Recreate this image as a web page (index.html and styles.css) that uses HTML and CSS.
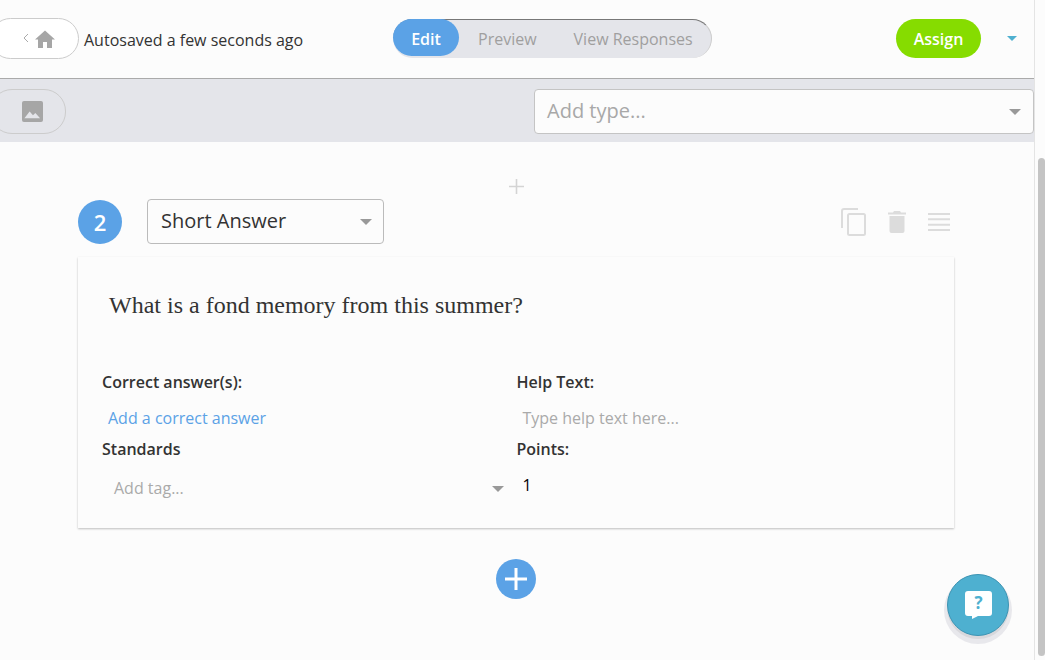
FILE: index.html
```html
<!DOCTYPE html>
<html lang="en">
<head>
<meta charset="utf-8">
<title>Question editor</title>
<link rel="stylesheet" href="styles.css">
</head>
<body>
<div class="app">
  <main class="main">
    <header class="topbar">
      <div class="left">
        <button class="pill back-pill">
          <svg class="chev" width="6" height="10" viewBox="0 0 6 10"><path d="M5 1 1 5l4 4" fill="none" stroke="#aaa" stroke-width="1"/></svg>
          <svg width="20" height="18" viewBox="0 0 20 18"><path d="M10 .5 0 9.500h3V18h5v-6h4v6h5V9.500h3z" fill="#a6a6a6"/></svg>
        </button>
        <span class="autosave">Autosaved a few seconds ago</span>
      </div>
      <nav class="tabs">
        <span class="tab tab-active">Edit</span>
        <span class="tab tab-preview">Preview</span>
        <span class="tab tab-responses">View Responses</span>
      </nav>
      <div class="right">
        <button class="assign">Assign</button>
        <span class="caret caret-blue"></span>
      </div>
    </header>
    <div class="toolbar">
      <button class="pill image-pill">
        <svg width="21" height="21" viewBox="0 0 22 22"><rect width="22" height="22" rx="2" fill="#a6a6a6"/><path d="M2.500 18 8 11l3.500 4 2.500-2.500 5 5.500z" fill="#e4e5ea"/></svg>
      </button>
      <div class="type-select">
        <span>Add type...</span>
        <span class="caret caret-gray"></span>
      </div>
    </div>
    <section class="content">
      <div class="add-small">
        <svg width="15" height="15" viewBox="0 0 15 15"><path d="M7.500 0v15M0 7.500h15" stroke="#d4d4d4" stroke-width="1.600"/></svg>
      </div>
      <div class="q-head">
        <span class="q-num">2</span>
        <div class="q-type">
          <span>Short Answer</span>
          <span class="caret caret-gray"></span>
        </div>
        <div class="q-actions">
          <svg width="25" height="28" viewBox="0 0 25 28"><path d="M17 1H3a2 2 0 0 0-2 2v17" fill="none" stroke="#dcdcdc" stroke-width="2"/><rect x="7" y="6" width="17" height="21" rx="1.500" fill="none" stroke="#dcdcdc" stroke-width="2"/></svg>
          <svg width="18" height="22" viewBox="0 0 18 22"><path d="M6 0h6l1 1.500h5v2H0v-2h5zM1.500 5h15v15a2 2 0 0 1-2 2h-11a2 2 0 0 1-2-2z" fill="#dcdcdc"/></svg>
          <svg width="22" height="18" viewBox="0 0 22 18"><path d="M0 1h22M0 6.330h22M0 11.670h22M0 17h22" stroke="#dcdcdc" stroke-width="2"/></svg>
        </div>
      </div>
      <article class="card">
        <h2 class="question">What is a fond memory from this summer?</h2>
        <div class="fields">
          <div class="field">
            <label class="label">Correct answer(s):</label>
            <a class="link">Add a correct answer</a>
          </div>
          <div class="field">
            <label class="label">Help Text:</label>
            <span class="hint hint-help">Type help text here...</span>
          </div>
          <div class="field">
            <label class="label">Standards</label>
            <div class="tag-row">
              <span class="hint">Add tag...</span>
              <span class="caret caret-gray"></span>
            </div>
          </div>
          <div class="field">
            <label class="label">Points:</label>
            <span class="points">1</span>
          </div>
        </div>
      </article>
      <div class="add-big">
        <svg width="24" height="24" viewBox="0 0 24 24"><path d="M12 1v22M1 12h22" stroke="#fff" stroke-width="3"/></svg>
      </div>
    </section>
    <button class="help">
      <svg width="27" height="28" viewBox="0 0 27 28"><path d="M3 0h21a3 3 0 0 1 3 3v19a3 3 0 0 1-3 3H13l-6 3v-3H3a3 3 0 0 1-3-3V3a3 3 0 0 1 3-3z" fill="#fff"/><text x="13.500" y="18" text-anchor="middle" class="help-q">?</text></svg>
    </button>
  </main>
  <aside class="scrollbar"><div class="thumb"></div></aside>
</div>
</body>
</html>
```

FILE: styles.css
```css
* { box-sizing: border-box; }
html, body { margin: 0; height: 100%; overflow: hidden; }
body { font-family: "Open Sans", sans-serif; background: #fcfcfc; color: #333; }
button { font-family: inherit; padding: 0; cursor: pointer; }
.app { display: flex; width: 1045px; height: 660px; }
.main { position: relative; width: 1034px; flex: none; overflow: hidden; }

.topbar { height: 79px; border-bottom: 1px solid #aaa; display: flex; align-items: flex-start; position: relative; background: #fcfcfc; }
.left { display: flex; align-items: center; margin-top: 18px; margin-left: -10px; width: 403px; }
.pill { background: transparent; border: 1px solid #ccc; border-radius: 22px; display: flex; align-items: center; justify-content: center; }
.back-pill { width: 89px; height: 41px; gap: 6px; padding-left: 9px; background: #fff; }
.chev { margin-top: -1px; }
.autosave { font-size: 16px; margin-left: 5px; padding-top: 2px; color: #333; }

.tabs { display: flex; align-items: center; width: 319px; height: 39px; margin-top: 19px; background: #e4e5ea; border-radius: 20px; border-top: 1px solid #777; border-right: 1px solid #ccc; }
.tab { font-size: 16px; font-weight: 500; color: #a09f9f; line-height: 37px; }
.tab-active { width: 66px; height: 37px; margin-top: -3px; background: #5ba2e6; color: #fff; border-radius: 19px; text-align: center; line-height: 40px; font-weight: 600; }
.tab-preview { margin-left: 19px; }
.tab-responses { margin-left: 37px; }

.right { display: flex; align-items: center; margin-left: 184px; margin-top: 19px; height: 39px; }
.assign { width: 85px; height: 39px; border: 0; border-radius: 20px; background: #86dc00; color: #fff; font-size: 16px; font-weight: 600; }
.caret { display: block; width: 0; height: 0; border-left: 6px solid transparent; border-right: 6px solid transparent; border-top: 6px solid #999; }
.caret-blue { border-top-color: #4fb0d0; margin-left: 26px; border-left-width: 5px; border-right-width: 5px; border-top-width: 5px; }

.toolbar { height: 63px; background: #e4e5ea; display: flex; align-items: flex-start; padding-top: 10px; }
.image-pill { width: 76px; height: 45px; margin-left: -10px; padding-left: 8px; }
.type-select { width: 500px; height: 45px; margin-left: 468px; background: #fcfcfc; border: 1px solid #c4c4c4; border-radius: 4px; display: flex; align-items: center; justify-content: space-between; padding: 0 12px 2px 12px; font-size: 20px; color: #a8a8a8; }
.type-select .caret { margin-top: 2px; }

.content { display: flex; flex-direction: column; align-items: center; padding: 0 80px 0 78px; }
.add-small { height: 15px; margin-top: 37px; display: flex; }
.add-small svg { display: block; }
.q-head { width: 100%; height: 45px; margin-top: 5px; display: flex; align-items: center; }
.q-num { width: 44px; height: 44px; border-radius: 50%; background: #5ba2e6; color: #fff; font-size: 22px; font-weight: 600; display: flex; align-items: center; justify-content: center; flex: none; margin-top: 1px; }
.q-type { width: 237px; height: 45px; margin-left: 25px; border: 1px solid #bbb; border-radius: 4px; display: flex; align-items: center; justify-content: space-between; padding: 0 11px 2px 13px; font-size: 20px; color: #333; }
.q-type .caret { margin-top: 2px; }
.q-actions { margin-left: auto; display: flex; align-items: center; gap: 22px; padding-right: 4px; margin-top: 1px; }
.q-actions svg { display: block; }

.card { width: 100%; height: 271px; margin-top: 13px; background: #fcfcfc; box-shadow: 0 1px 2px rgba(0,0,0,.25); padding: 0 24px; position: relative; }
.question { margin: 0; padding: 35px 0 0 7px; font-family: "Liberation Serif", serif; font-size: 24px; font-weight: 400; line-height: 27px; color: #333; }
.fields { display: grid; grid-template-columns: 414.500px 1fr; margin-top: 53px; }
.field { display: flex; flex-direction: column; align-items: flex-start; }
.field:nth-child(-n+2) { height: 67px; }
.label { font-size: 16px; font-weight: 600; line-height: 20px; color: #333; }
.link { font-size: 16px; line-height: 20px; margin-top: 16px; margin-left: 6px; color: #5ba2e6; }
.hint { font-size: 16px; line-height: 20px; color: #aaa; }
.hint-help { margin-top: 16px; margin-left: 6px; }
.tag-row { width: 402px; display: flex; align-items: center; justify-content: space-between; margin-top: 19px; padding-left: 12px; }
.tag-row .caret { margin-top: 2px; }
.points { font-size: 16px; line-height: 20px; margin-top: 16px; margin-left: 6px; color: #000; }

.add-big { width: 40px; height: 40px; margin-top: 31px; border-radius: 50%; background: #5ba2e6; display: flex; align-items: center; justify-content: center; }

.help { position: absolute; left: 947px; top: 574px; width: 62px; height: 62px; border-radius: 50%; border: 1px solid #3d94b3; background: #4eb0d0; box-shadow: 0 3px 0 0 #d8d8dc, 0 5px 0 3px #e8e8ec; display: flex; align-items: center; justify-content: center; }
.help-q { font-family: "Open Sans", sans-serif; font-size: 17px; font-weight: 700; fill: #4eb0d0; }

.scrollbar { width: 11px; flex: none; background: #fcfcfc; border-left: 1px solid #e4e4e4; padding: 158px 0 4px 3px; }
.thumb { width: 7px; height: 100%; background: #c4c4c4; border-radius: 4px; }
```
